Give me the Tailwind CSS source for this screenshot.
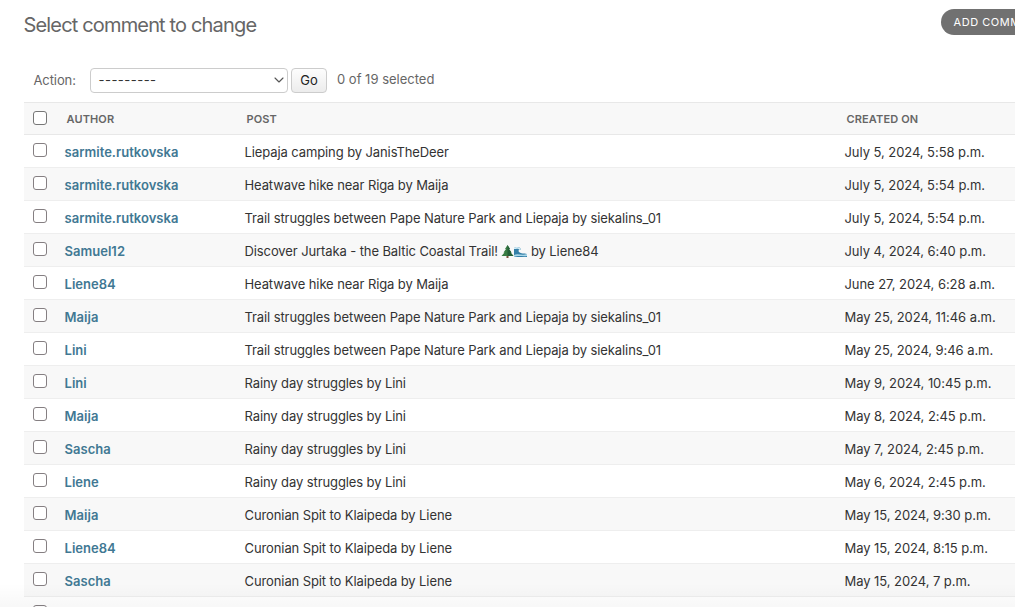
<!DOCTYPE html>
<html lang="en">
<head>
<meta charset="utf-8">
<title>Select comment to change</title>
<script src="https://cdn.jsdelivr.net/npm/@tailwindcss/browser@4"></script>
</head>
<body class="bg-white overflow-hidden font-['Inter','Liberation_Sans',sans-serif] text-[13px] text-[#333]">
<main class="relative w-[1015px] h-[607px] overflow-hidden pl-[23.5px] flex flex-col">
  <header class="flex justify-between h-[67px] shrink-0">
    <h1 class="pt-[9px] text-[20px] leading-8 font-normal tracking-[-0.84px] text-[#666] whitespace-nowrap">Select comment to change</h1>
    <a class="mt-[9px] h-[26px] w-[74px] shrink-0 rounded-l-full bg-[#717171] pl-[12.5px] text-[11px] leading-[26px] tracking-[0.55px] text-white whitespace-nowrap overflow-hidden">ADD COMMENT</a>
  </header>
  <div class="flex items-start h-[35px] shrink-0 pl-[10px] text-[#666] whitespace-nowrap">
    <span class="w-[56px] leading-[26px] tracking-[-0.1px]">Action:</span>
    <div class="flex items-center justify-between w-[198.5px] h-[25px] mt-[0.5px] rounded-[4px] border border-[#ccc] bg-white pl-[8px] pr-[3px] text-[#333]">
      <span class="tracking-[0.47px] pt-[2px]">---------</span>
      <svg class="w-[10px] h-[6px]" viewBox="0 0 10 6" fill="none" stroke="#555" stroke-width="1.1" stroke-linecap="round" stroke-linejoin="round"><path d="M1 1l4 4 4-4"/></svg>
    </div>
    <button class="ml-[3px] mt-[0.5px] w-[36px] h-[25px] rounded-[4px] border border-[#ccc] bg-linear-to-b from-[#fdfdfd] to-[#ececec] leading-[23px] text-[#222]">Go</button>
    <span class="ml-[10px] leading-[24px]">0 of 19 selected</span>
  </div>
  <div class="grid grid-cols-[41px_180px_600px_1fr] h-[33px] shrink-0 border-y border-[#e8e8e8] bg-[#f8f8f8] text-[11px] leading-[32px] font-semibold tracking-[0.13px] text-[#666]">
    <span class="pl-[9.5px] pt-[8px]"><i class="block size-[14px] rounded-[3px] border border-[#777] bg-white"></i></span>
    <span class="pl-[2px]">AUTHOR</span><span class="pl-[2px]">POST</span><span class="pl-[2px]">CREATED ON</span>
  </div>
  <div id="rows" class="shrink-0"></div>
  <div class="absolute inset-x-0 bottom-0 h-[24px] bg-linear-to-b from-black/0 to-black/3"></div>
</main>
<template id="row">
  <div class="grid grid-cols-[41px_180px_600px_1fr] h-[33px] border-b border-[#eee] leading-[34px] whitespace-nowrap even:bg-[#f8f8f8]">
    <span class="pl-[9.5px] pt-[8px]"><i class="block size-[14px] rounded-[3px] border border-[#857f82] bg-white"></i></span>
    <a class="font-semibold tracking-[0.03px] text-[#417893]"></a><span class="post tracking-[-0.1px]"></span><span class="date tracking-[-0.06px]"></span>
  </div>
</template>
<template id="emoji"><svg class="inline-block align-[-2px] w-[26px] h-[13px]" viewBox="0 0 26 13"><path d="M5.5 9h2v4h-2z" fill="#79513a"/><path d="M6.5 0L9 4H8l2.5 3.5H9.5L12.5 11H.5l3-3.5h-1L5 4H4z" fill="#397c43"/><path d="M6.5 0L9 4H8l2.5 3.5H9.5L12.5 11h-6z" fill="#245f38"/><path d="M13 3c3-2 7-1 7 2-2-1-3 0-2 2 2 2 5 1 8 2v3H13z" fill="#347fa7"/><path d="M13 3c2-2 6-1 7 1l-1 1c-2-2-4-1-6-1z" fill="#d5edf6"/><path d="M13 10c4-2 8 1 13-1v2c-4 1-8-1-13 1z" fill="#a9d7e9"/></svg></template>
<script>
const T = 'Trail struggles between Pape Nature Park and Liepaja by siekalins_01', H = 'Heatwave hike near Riga by Maija', R = 'Rainy day struggles by Lini', C = 'Curonian Spit to Klaipeda by Liene';
const data = [
 ['sarmite.rutkovska','Liepaja camping by JanisTheDeer','July 5, 2024, 5:58 p.m.'],
 ['sarmite.rutkovska',H,'July 5, 2024, 5:54 p.m.'],
 ['sarmite.rutkovska',T,'July 5, 2024, 5:54 p.m.'],
 ['Samuel12','Discover Jurtaka - the Baltic Coastal Trail! | by Liene84','July 4, 2024, 6:40 p.m.'],
 ['Liene84',H,'June 27, 2024, 6:28 a.m.'],
 ['Maija',T,'May 25, 2024, 11:46 a.m.'],
 ['Lini',T,'May 25, 2024, 9:46 a.m.'],
 ['Lini',R,'May 9, 2024, 10:45 p.m.'],
 ['Maija',R,'May 8, 2024, 2:45 p.m.'],
 ['Sascha',R,'May 7, 2024, 2:45 p.m.'],
 ['Liene',R,'May 6, 2024, 2:45 p.m.'],
 ['Maija',C,'May 15, 2024, 9:30 p.m.'],
 ['Liene84',C,'May 15, 2024, 8:15 p.m.'],
 ['Sascha',C,'May 15, 2024, 7 p.m.'],
 ['','','']
];
for (const [author, post, date] of data) {
  const row = document.getElementById('row').content.cloneNode(true);
  row.querySelector('a').textContent = author;
  const p = row.querySelector('.post'), [before, after] = post.split('|');
  p.append(before);
  if (after) p.append(document.getElementById('emoji').content.cloneNode(true), after);
  row.querySelector('.date').textContent = date;
  document.getElementById('rows').append(row);
}
</script>
</body>
</html>
